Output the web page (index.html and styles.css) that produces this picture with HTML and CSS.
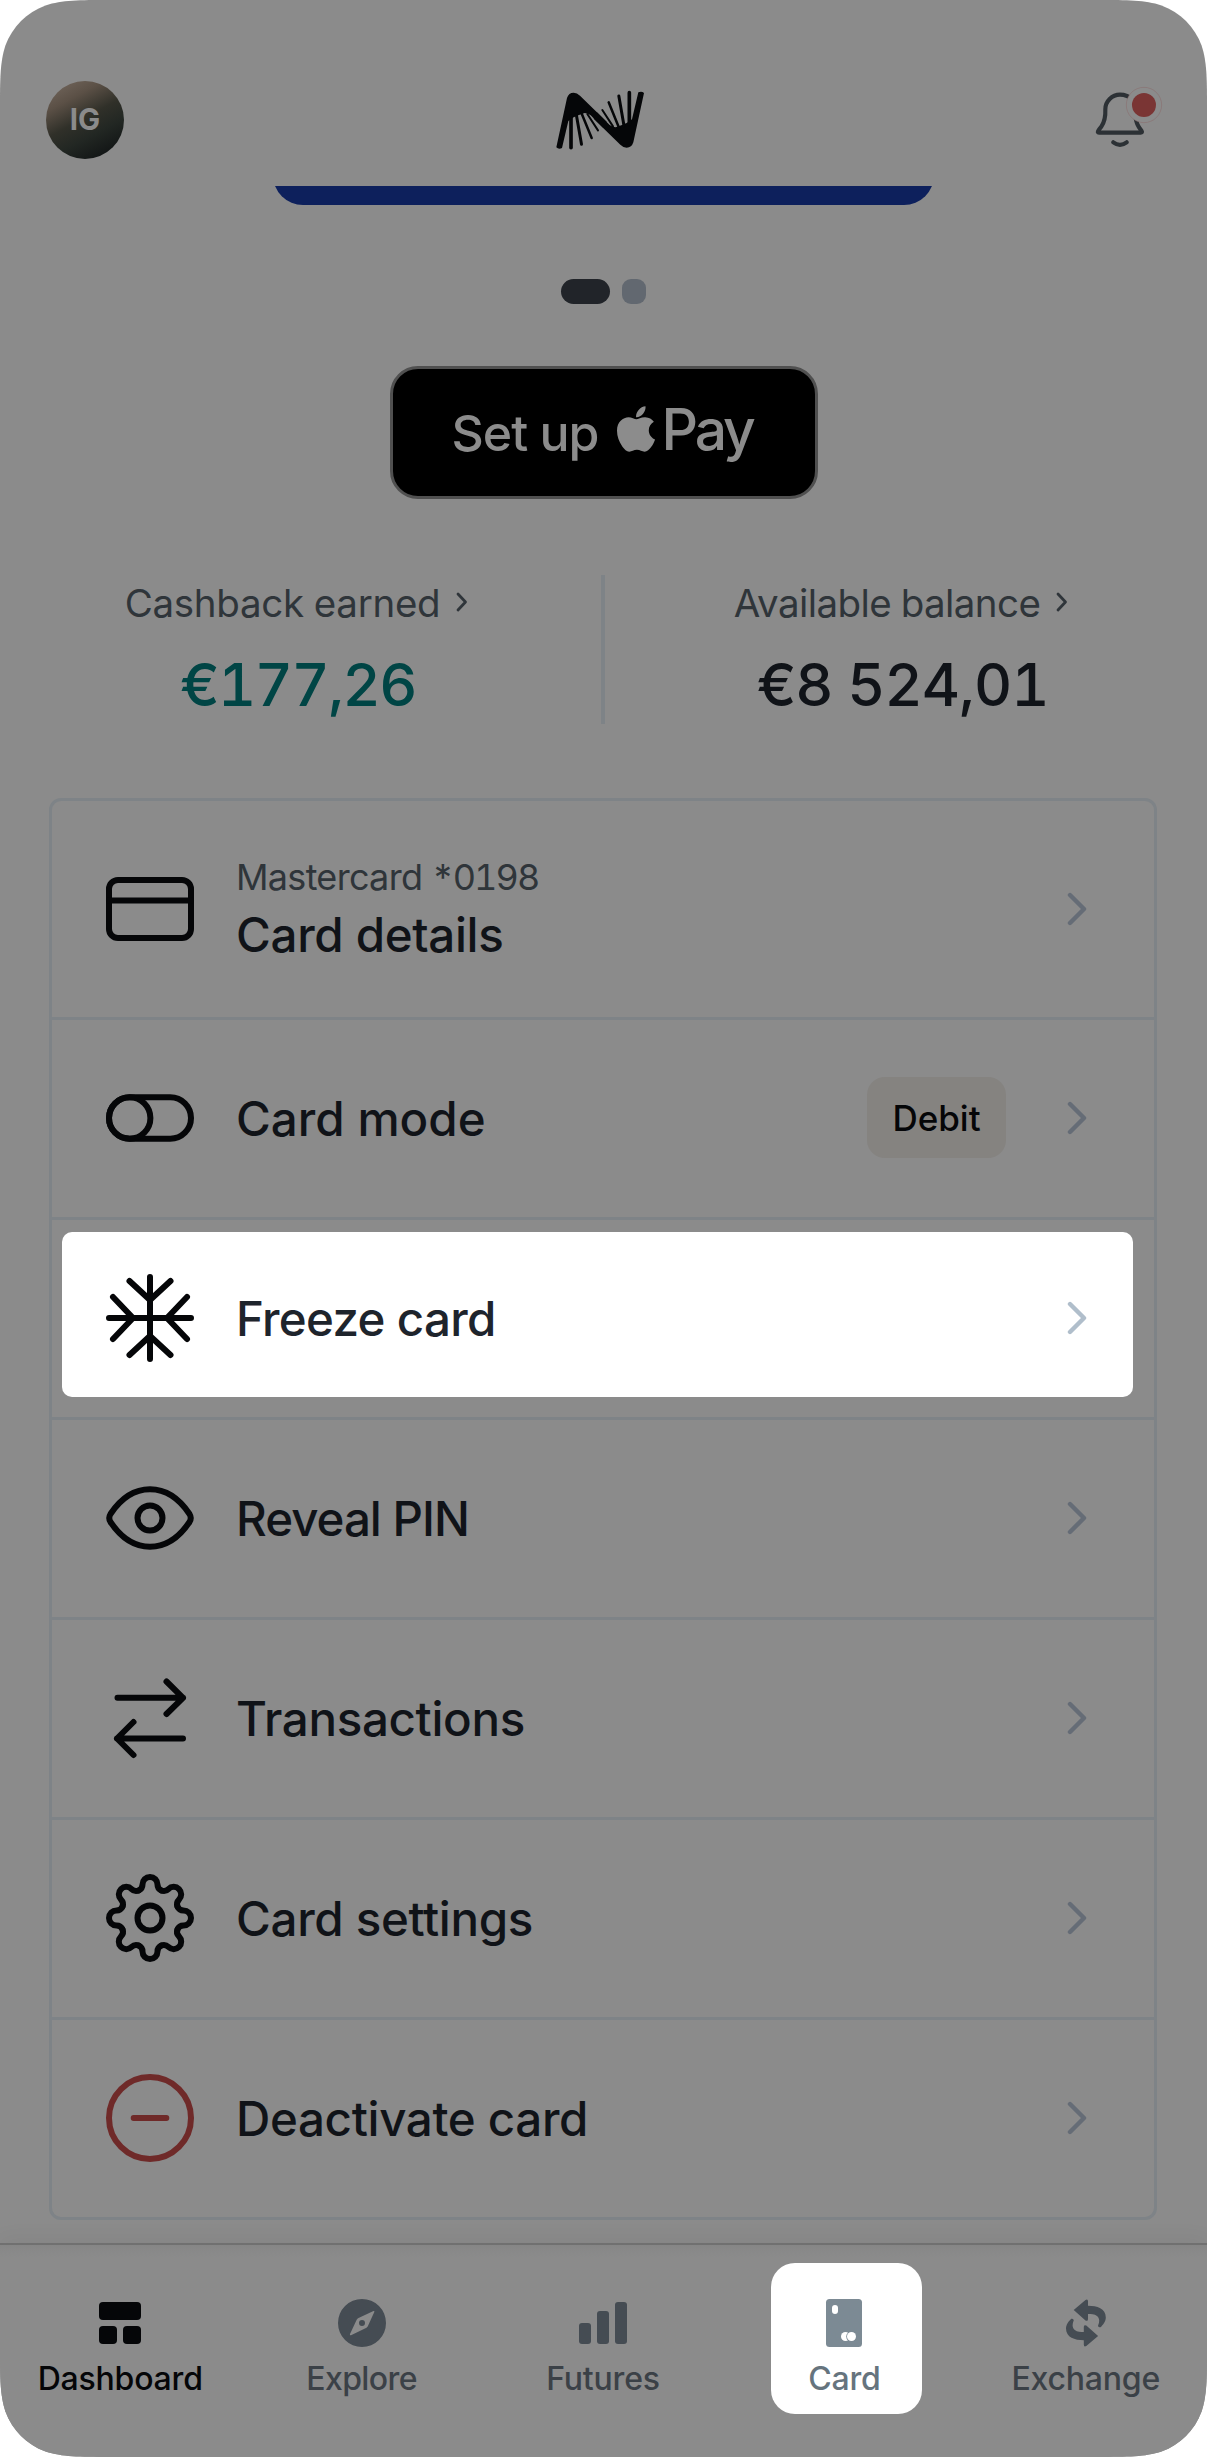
FILE: index.html
```html
<!DOCTYPE html>
<html lang="en">
<head>
<meta charset="utf-8">
<title>Card</title>
<link rel="stylesheet" href="styles.css">
</head>
<body>
<svg class="defs" aria-hidden="true">
  <defs>
    <symbol id="chevron" viewBox="0 0 20 36"><path d="M3 4 L17 18 L3 32" fill="none" stroke="currentColor" stroke-width="4.4" stroke-linecap="round" stroke-linejoin="round"/></symbol>
    <symbol id="chevron-sm" viewBox="0 0 12 20"><path d="M2 2 L9.5 10 L2 18" fill="none" stroke="currentColor" stroke-width="2.8" stroke-linecap="round" stroke-linejoin="round"/></symbol>
    <path id="gear-tooth" d="M33.6 17.5 C36.5 16.3 37.5 14 37.5 11.5 A7.5 7.5 0 0 1 52.5 11.5 C52.5 14 53.5 16.3 56.4 17.5"/>
    <path id="logo-half" d="M169 290 L201 142 Q206 126 221 126 Q231 126 240 135 L320 213 L310 232 L272 194 Q262 187 254 187 L237 193 L221 200 L205 211 L186 292 Q176 297 169 290Z"/>
    <g id="logo-fingers" stroke="#050608" stroke-linecap="round"><path stroke-width="11" d="M213 196V291"/><path stroke-width="9" d="M229 192L244.500 281"/><path stroke-width="7.500" d="M244 186L275 262"/><path stroke-width="6" d="M262 190L294 239"/></g>
    <path id="swap-arrow" d="M7.700 10.700 L19.500 .600 Q22 -.800 22 2 V6.300 C31 6.300 39.800 9 39.800 18 C39.800 22 37 25.500 34.500 27.800 Q32.500 28.500 32 26.300 C33.500 23 34 19 31 16.700 C28.500 14.700 25 14.700 22 14.700 V19.500 Q22 22.300 19.500 21 Z"/>
  </defs>
</svg>
<div class="phone">
  <header class="header">
    <div class="avatar">IG</div>
    <svg class="logo" viewBox="165 115 270 185"><g fill="#050608"><use href="#logo-half"/><use href="#logo-fingers"/><g transform="rotate(180 300.500 208.500)"><use href="#logo-half"/><use href="#logo-fingers"/></g></g></svg>
    <svg class="bell" viewBox="285 255 205 190">
      <g fill="none" stroke="#2c3135" stroke-width="12.500" stroke-linecap="round" stroke-linejoin="round"><path d="M400 300Q382 284 360 284C336 284 316 304 316 328C317 350 314 365 304 380Q298 387 294 394Q292 398 298 398H422Q428 398 425 393L417 382Q410 372 406 350"/><path d="M340 427Q360 442 380 427"/></g>
      <circle cx="432" cy="315" r="53" fill="#8b8b8b" stroke="#8a6a6a" stroke-width="1.500"/><circle cx="432" cy="315" r="36" fill="#7a3534"/>
    </svg>
  </header>

  <div class="card-peek"><div class="bank-card"></div></div>
  <div class="dots"><span class="dot dot-active"></span><span class="dot"></span></div>

  <button class="apple-pay"><span class="setup">Set up</span><svg class="apple" viewBox="4 32 376 448"><path fill="#8c8c8c" d="M318.700 268.700c-.2-36.700 16.400-64.400 50-84.800-18.800-26.900-47.200-41.700-84.700-44.600-35.500-2.800-74.300 20.700-88.500 20.700-15 0-49.400-19.700-76.400-19.700C63.300 141.200 4 184.800 4 273.500q0 39.300 14.400 81.200c12.800 36.700 59 126.700 107.200 125.200 25.200-.6 43-17.900 75.800-17.900 31.800 0 48.300 17.900 76.400 17.900 48.600-.7 90.400-82.500 102.600-119.300-65.200-30.700-61.700-90-61.700-91.900zm-56.600-164.200c27.300-32.400 24.800-61.900 24-72.500-24.100 1.400-52 16.400-67.900 34.900-17.500 19.800-27.800 44.300-25.600 71.900 26.100 2 49.900-11.400 69.500-34.300z"/></svg><span class="pay">Pay</span></button>

  <section class="stats">
    <div class="stat">
      <div class="stat-label"><span>Cashback earned</span><svg><use href="#chevron-sm"/></svg></div>
      <div class="stat-value earned">€177,26</div>
    </div>
    <div class="stat">
      <div class="stat-label available"><span>Available balance</span><svg><use href="#chevron-sm"/></svg></div>
      <div class="stat-value">€8 524,01</div>
    </div>
  </section>

  <main class="list">
    <div class="row">
      <svg class="icon" viewBox="0 0 90 90"><rect x="4" y="16" width="82" height="58" rx="9"/><path d="M4 36.500H86"/></svg>
      <div class="text"><div class="sub">Mastercard <span class="digits">*0198</span></div><div class="title">Card details</div></div>
      <svg class="chev"><use href="#chevron"/></svg>
    </div>
    <div class="row">
      <svg class="icon" viewBox="0 0 90 90"><rect x="4" y="24.300" width="82" height="41.400" rx="20.700"/><circle cx="24.700" cy="45" r="20.700"/></svg>
      <div class="text title mode">Card mode</div>
      <span class="tag">Debit</span>
      <svg class="chev"><use href="#chevron"/></svg>
    </div>
    <div class="row highlighted">
      <svg class="icon" viewBox="0 0 90 90"><path d="M45 4V86M4 45H86M24.500 8L45 27L65.500 8M24.500 82L45 63L65.500 82M8 24L28 45L8 66M82 24L62 45L82 66"/></svg>
      <div class="text title freeze">Freeze card</div>
      <svg class="chev"><use href="#chevron"/></svg>
    </div>
    <div class="row">
      <svg class="icon" viewBox="0 0 90 90"><path d="M5.500 41Q22 16.300 45 16.300Q68 16.300 84.500 41Q87 45 84.500 49Q68 73.700 45 73.700Q22 73.700 5.500 49Q3 45 5.500 41Z"/><circle cx="45" cy="45" r="12.500"/></svg>
      <div class="text title reveal">Reveal PIN</div>
      <svg class="chev"><use href="#chevron"/></svg>
    </div>
    <div class="row">
      <svg class="icon" viewBox="0 0 90 90"><path d="M12.500 24.800H78M61.500 8.500L78 24.800L61.500 41M78 65.500H12M28.500 49L12 65.500L28.500 82"/></svg>
      <div class="text title">Transactions</div>
      <svg class="chev"><use href="#chevron"/></svg>
    </div>
    <div class="row">
      <svg class="icon" viewBox="0 0 90 90"><use href="#gear-tooth"/><use href="#gear-tooth" transform="rotate(45 45 45)"/><use href="#gear-tooth" transform="rotate(90 45 45)"/><use href="#gear-tooth" transform="rotate(135 45 45)"/><use href="#gear-tooth" transform="rotate(180 45 45)"/><use href="#gear-tooth" transform="rotate(225 45 45)"/><use href="#gear-tooth" transform="rotate(270 45 45)"/><use href="#gear-tooth" transform="rotate(315 45 45)"/><circle cx="45" cy="45" r="12.500"/></svg>
      <div class="text title">Card settings</div>
      <svg class="chev"><use href="#chevron"/></svg>
    </div>
    <div class="row">
      <svg class="icon danger" viewBox="0 0 90 90"><circle cx="45" cy="45" r="41"/><path d="M28.700 45H61.300"/></svg>
      <div class="text title">Deactivate card</div>
      <svg class="chev"><use href="#chevron"/></svg>
    </div>
  </main>

  <nav class="nav">
    <a class="tab active"><svg viewBox="0 0 48 48"><rect x="3" y="3" width="42" height="18" rx="4"/><rect x="3" y="27" width="18" height="18" rx="4"/><rect x="27" y="27" width="18" height="18" rx="4"/></svg><span>Dashboard</span></a>
    <a class="tab explore"><svg viewBox="0 0 48 48"><path fill-rule="evenodd" d="M24 0a24 24 0 1 0 0 48a24 24 0 1 0 0-48ZM35.500 12Q36.800 11.800 36.300 13L29.700 27.500L28.500 28.800L13 36.200Q11.500 36.500 12 35L18.800 20.500L20 19.300ZM24 21a3 3 0 1 0 0 6a3 3 0 1 0 0-6Z"/></svg><span>Explore</span></a>
    <a class="tab"><svg viewBox="0 0 48 48"><rect x="0" y="24" width="12" height="21" rx="3"/><rect x="18" y="12" width="12" height="33" rx="3"/><rect x="36" y="3" width="12" height="42" rx="3"/></svg><span>Futures</span></a>
    <a class="tab selected"><svg viewBox="0 0 48 48"><rect x="6" width="36" height="48" rx="3.500"/><g fill="#fff"><rect x="12" y="6" width="6" height="9" rx="3"/><circle cx="25.500" cy="37.500" r="4.500"/><circle cx="31.500" cy="37.500" r="5.300" fill="#7c8a94"/><circle cx="31.500" cy="37.500" r="4.500"/></g></svg><span>Card</span></a>
    <a class="tab"><svg viewBox="-4 -.400 48 48"><use href="#swap-arrow"/><use href="#swap-arrow" transform="rotate(180 19.900 23.600)"/></svg><span>Exchange</span></a>
  </nav>
</div>
</body>
</html>
```
FILE: styles.css
```css
* { box-sizing: border-box; }

body {
  margin: 0;
  background: #fff;
  font-family: Inter, "Liberation Sans", sans-serif;
  font-feature-settings: "tnum";
  -webkit-font-smoothing: antialiased;
}

.defs { position: absolute; width: 0; height: 0; }

.phone {
  display: flex;
  flex-direction: column;
  width: 1207px;
  height: 2457px;
  background: #8b8b8b;
  clip-path: path("M0 110C0 78.4 0 62.5 5.4 45.5C12.2 26.8 26.8 12.2 45.5 5.4C62.5 0 78.4 0 110 0H1097C1128.6 0 1144.5 0 1161.5 5.4C1180.2 12.2 1194.8 26.8 1201.600 45.5C1207 62.5 1207 78.4 1207 110V2347C1207 2378.6 1207 2394.5 1201.6 2411.5C1194.8 2430.2 1180.2 2444.8 1161.5 2451.6C1144.5 2457 1128.6 2457 1097 2457H110C78.4 2457 62.5 2457 45.5 2451.6C26.8 2444.8 12.2 2430.2 5.4 2411.5C0 2394.5 0 2378.6 0 2347Z");
}

/* Header */
.header {
  display: flex;
  justify-content: space-between;
  align-items: center;
  height: 186px;
  padding: 54px 44px 0 46px;
}
.avatar {
  width: 78px;
  height: 78px;
  border-radius: 50%;
  background: linear-gradient(152deg, #73675d 4%, #5b5046 26%, #303029 48%, #222723 66%, #0e1112 94%);
  color: #8b8b8b;
  font-size: 29.5px;
  font-weight: 700;
  line-height: 77px;
  text-align: center;
}
.logo { width: 90px; height: 61.7px; margin-left: -18px; }
.bell { width: 68.3px; height: 63.3px; margin-top: -6px; }

/* Bank card carousel */
.card-peek { height: 19px; overflow: hidden; }
.bank-card {
  width: 661px;
  height: 80px;
  margin: -61px auto 0;
  border-radius: 30px;
  background: #0d205c;
}
.dots { display: flex; justify-content: center; gap: 12px; margin-top: 74px; }
.dot { width: 24px; height: 25px; border-radius: 9px; background: #626870; }
.dot-active { width: 49px; border-radius: 12.5px; background: #212429; }

.apple-pay {
  display: flex;
  align-items: center;
  width: 428px;
  height: 133px;
  margin: 62px auto 0;
  padding: 0 0 0 59px;
  border: 3px solid #505050;
  border-radius: 28px;
  background: #000;
  color: #8c8c8c;
  font-family: inherit;
}
.setup { font-size: 50px; font-weight: 500; letter-spacing: -1px; line-height: 60px; }
.apple { width: 38px; height: 46px; margin: -8px 7px 0 18px; }
.pay { font-size: 57px; font-weight: 460; letter-spacing: -3.2px; line-height: 66px; margin-top: -6px; }

/* Balances */
.stats {
  display: grid;
  grid-template-columns: 605px 602px;
  height: 149px;
  margin-top: 76px;
}
.stat { padding: 4px 7px 0 0; text-align: center; }
.stat:first-child { border-right: 4px solid #7e8387; padding-right: 5px; }
.stat-label {
  display: flex;
  justify-content: center;
  align-items: center;
  gap: 16px;
  margin-left: -3px;
  color: #2f353a;
  font-size: 38.5px;
  line-height: 48px;
  letter-spacing: -.3px;
}
.available { letter-spacing: -.6px; }
.stat-label svg { width: 12px; height: 20px; margin-top: -2px; }
.stat-value {
  margin-top: 22px;
  color: #101318;
  font-size: 59px;
  font-weight: 500;
  line-height: 71px;
  letter-spacing: -1px;
}
.earned { color: #004545; letter-spacing: -1.5px; }

/* Card actions */
.list {
  width: 1108px;
  margin: 74px 0 0 49px;
  border: 3px solid #7e8387;
  border-radius: 12px;
}
.row {
  display: flex;
  align-items: center;
  position: relative;
  height: 200px;
  padding: 0 67px 0 53px;
  border-bottom: 3px solid #7e8387;
}
.row:first-child { height: 219px; }
.row:last-child { height: 197px; border-bottom: 0; }
.icon {
  width: 90px;
  height: 90px;
  margin-right: 41px;
  margin-top: -1px;
  fill: none;
  stroke: #050608;
  stroke-width: 6;
  stroke-linecap: round;
  stroke-linejoin: round;
}
.danger { stroke: #6f2a29; }
.text { flex: 1; }
.sub { color: #2f353a; font-size: 36px; line-height: 50px; letter-spacing: -.7px; margin-top: -1px; }
.digits { letter-spacing: -1.9px; }
.title { color: #101318; font-size: 47.5px; font-weight: 500; line-height: 60px; letter-spacing: -.34px; }
.sub + .title { margin-top: 3px; }
.mode { letter-spacing: 0; }
.freeze { color: #1e242c; letter-spacing: -.69px; }
.reveal { letter-spacing: -1px; }
.tag {
  width: 139px;
  height: 81px;
  margin: -2px 61px 0 0;
  border-radius: 18px;
  background: #858380;
  color: #050608;
  font-size: 35px;
  font-weight: 500;
  line-height: 82px;
  text-align: center;
}
.chev { width: 20px; height: 36px; margin-top: -1px; color: #656c76; }

.highlighted > * { position: relative; }
.highlighted::before {
  content: "";
  position: absolute;
  inset: 12px 21px 20px 10px;
  border-radius: 10px;
  background: #fff;
}
.highlighted .chev { color: #b0becb; }

/* Tab bar */
.nav {
  display: grid;
  grid-template-columns: repeat(5, 1fr);
  height: 214px;
  margin-top: auto;
  border-top: 2px solid #707070;
  background: linear-gradient(#868686, #8b8b8b 12px);
  box-shadow: 0 -4px 20px rgba(0, 0, 0, .05);
}
.tab {
  display: flex;
  flex-direction: column;
  align-items: center;
  position: relative;
  padding: 54px 1px 0 0;
  color: #3b4147;
  fill: #454c53;
  font-size: 32px;
  line-height: 40px;
}
.tab svg { width: 48px; height: 48px; margin-bottom: 12px; }
.tab span { font-weight: 470; letter-spacing: -.2px; }
.explore span { letter-spacing: -.6px; }
.active { color: #050608; fill: #050608; }
.active span { font-weight: 500; }
.selected { color: #66747e; fill: #7c8a94; }
.selected > * { position: relative; }
.selected::before {
  content: "";
  position: absolute;
  top: 18px;
  left: 47px;
  width: 151px;
  height: 151px;
  border-radius: 24px;
  background: #fff;
}
```
